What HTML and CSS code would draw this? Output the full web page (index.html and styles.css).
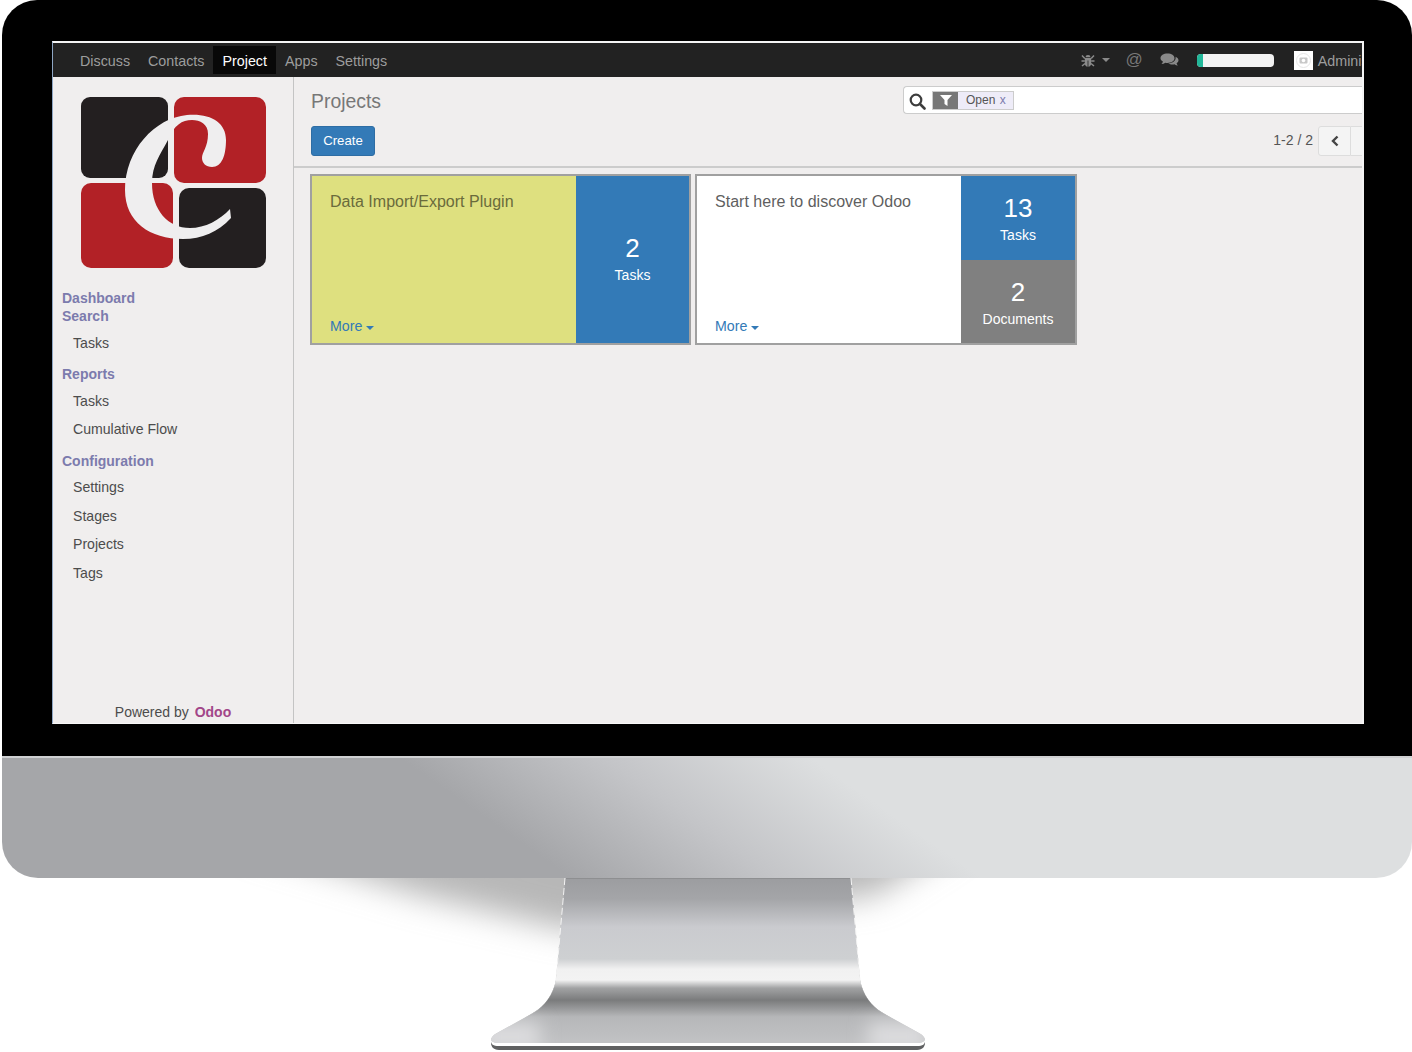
FILE: index.html
```html
<!DOCTYPE html>
<html lang="en">
<head>
  <meta charset="UTF-8">
  <title>Projects - Odoo</title>
  <link rel="stylesheet" href="styles.css">
</head>
<body>

  <div class="bezel">
    <div class="screen">

      <nav class="topbar">
        <ul class="menu">
          <li>Discuss</li>
          <li>Contacts</li>
          <li class="active">Project</li>
          <li>Apps</li>
          <li>Settings</li>
        </ul>
        <div class="systray">
          <svg class="bug" width="14" height="13" viewBox="0 0 14 13">
            <path d="M4.500 3.200a2.500 2.300 0 0 1 5 0z" fill="#8a8a8a"/>
            <path d="M3.800 4h6.400v5.200c0 2-1.400 3.400-2.800 3.600V6.500h-.8v6.300c-1.400-.2-2.800-1.600-2.800-3.600z" fill="#8a8a8a"/>
            <path d="M1 1.500l2.800 3M13 1.500l-2.800 3M.5 7h3.300M13.500 7h-3.300M1 12l3-2.500M13 12l-3-2.500" stroke="#8a8a8a" stroke-width="1.500" fill="none"/>
          </svg>
          <span class="caret nav-caret"></span>
          <span class="at">@</span>
          <svg class="chat" width="19" height="14" viewBox="0 0 19 14">
            <path d="M7.500 0.500c4 0 7 2 7 4.700s-3 4.700-7 4.700c-.8 0-1.500-.1-2.200-.2-1 .8-2.300 1.300-3.800 1.400.8-.8 1.300-1.700 1.400-2.600C1.300 7.600.5 6.500.5 5.200.5 2.500 3.500.5 7.500.5z" fill="#8a8a8a"/>
            <path d="M15.600 3.700c1.800.8 2.900 2 2.900 3.500 0 1.200-.7 2.200-1.900 3 .1.900.6 1.700 1.300 2.400-1.300-.1-2.500-.6-3.400-1.300-.6.100-1.200.2-1.900.2-1.800 0-3.300-.5-4.400-1.300 4.500.1 8-2.300 7.400-6.500z" fill="#8a8a8a"/>
          </svg>
          <div class="progress"><span class="progress-fill"></span></div>
          <div class="avatar">
            <svg width="19" height="19" viewBox="0 0 19 19">
              <circle cx="9.500" cy="9.500" r="7" fill="none" stroke="#e6e6e6"/>
              <rect x="5.500" y="6.500" width="8" height="6" rx="1" fill="#c8c8c8"/>
              <circle cx="9.500" cy="9.500" r="1.800" fill="#fff"/>
            </svg>
          </div>
          <span class="user">Administrator</span>
        </div>
      </nav>

      <div class="main">
        <aside class="sidebar">
          <svg class="logo" width="185" height="171" viewBox="81 97 185 171">
            <rect x="81" y="97" width="87" height="81" rx="9" fill="#231f20"/>
            <rect x="174" y="97" width="92" height="86" rx="10" fill="#b22126"/>
            <rect x="81" y="183" width="92" height="85" rx="10" fill="#b22126"/>
            <rect x="179" y="188" width="87" height="80" rx="10" fill="#231f20"/>
            <path d="M187 115C210 113 226 122 226 140 226 155 222 167 212 167 206 167 202 163 202 158 202 152 208 147 208 134 208 124 200 120 192 120 182 120 174 125 168 140 160 155 152 165 152 183 152 210 168 228 190 228 205 228 220 220 230 209L231 218C218 232 202 239 183 239 150 239 125 222 125 190 125 150 155 118 187 115z" fill="#efeeef"/>
          </svg>

          <div class="menu-head">Dashboard</div>
          <div class="menu-head">Search</div>
          <ul class="menu-items">
            <li>Tasks</li>
          </ul>
          <div class="menu-head">Reports</div>
          <ul class="menu-items">
            <li>Tasks</li>
            <li>Cumulative Flow</li>
          </ul>
          <div class="menu-head">Configuration</div>
          <ul class="menu-items">
            <li>Settings</li>
            <li>Stages</li>
            <li>Projects</li>
            <li>Tags</li>
          </ul>

          <div class="powered">Powered by <b>Odoo</b></div>
        </aside>

        <section class="content">
          <div class="control-panel">
            <div class="panel-row">
              <h1>Projects</h1>
              <div class="search">
                <svg class="search-icon" width="17" height="17" viewBox="0 0 17 17">
                  <circle cx="7" cy="7" r="5.300" fill="none" stroke="#3d3d3d" stroke-width="2.200"/>
                  <path d="M11 11l4.500 4.500" stroke="#3d3d3d" stroke-width="2.600" stroke-linecap="round"/>
                </svg>
                <div class="facet">
                  <span class="facet-icon">
                    <svg width="12" height="11" viewBox="0 0 12 11"><path d="M0 0h12L7.500 5v6l-3-2V5z" fill="#fff"/></svg>
                  </span>
                  <span class="facet-label">Open <i>x</i></span>
                </div>
              </div>
            </div>
            <div class="panel-row second">
              <button class="create">Create</button>
              <div class="pager">
                <span class="pager-count">1-2 / 2</span>
                <button class="pager-btn">
                  <svg width="10" height="12" viewBox="0 0 10 12"><path d="M7.500 1.500L3 6l4.500 4.500" fill="none" stroke="#444" stroke-width="2.400"/></svg>
                </button>
                <button class="pager-btn"></button>
              </div>
            </div>
          </div>

          <div class="cards">
            <div class="card">
              <div class="card-body yellow">
                <div class="card-title">Data Import/Export Plugin</div>
                <div class="card-more">More <span class="caret"></span></div>
              </div>
              <div class="card-stats">
                <div class="stat blue"><span class="num">2</span><span class="lbl">Tasks</span></div>
              </div>
            </div>
            <div class="card">
              <div class="card-body">
                <div class="card-title">Start here to discover Odoo</div>
                <div class="card-more">More <span class="caret"></span></div>
              </div>
              <div class="card-stats">
                <div class="stat blue top"><span class="num">13</span><span class="lbl">Tasks</span></div>
                <div class="stat grey"><span class="num">2</span><span class="lbl">Documents</span></div>
              </div>
            </div>
          </div>
        </section>
      </div>
    </div>
  </div>

  <div class="chin"></div>

  <svg class="stand" width="1412" height="174" viewBox="0 878 1412 174">
    <defs>
      <filter id="blur" x="-20%" y="-100%" width="140%" height="300%">
        <feGaussianBlur stdDeviation="16"/>
      </filter>
      <filter id="soft" x="-50%" y="-50%" width="200%" height="200%">
        <feGaussianBlur stdDeviation="9"/>
      </filter>
      <linearGradient id="neck" x1="0" y1="878" x2="0" y2="1050" gradientUnits="userSpaceOnUse">
        <stop offset="0" stop-color="#9c9da0"/>
        <stop offset="0.12" stop-color="#a4a5a8"/>
        <stop offset="0.285" stop-color="#cacbcf"/>
        <stop offset="0.47" stop-color="#ced0d2"/>
        <stop offset="0.53" stop-color="#f1f1f1"/>
        <stop offset="0.593" stop-color="#f3f3f3"/>
        <stop offset="0.64" stop-color="#a2a3a4"/>
        <stop offset="0.71" stop-color="#7a7b7c"/>
        <stop offset="0.808" stop-color="#b6b7b9"/>
        <stop offset="0.94" stop-color="#c0c1c3"/>
      </linearGradient>
      <clipPath id="foot">
        <path d="M491 1039c1-2 2-4 6-6l36-20c12-7 20-18 23-33l9-102h286l9 102c3 15 11 26 23 33l36 20c4 2 5 4 6 6 0 2-2 4-8 4H499c-6 0-8-2-8-4z"/>
      </clipPath>
    </defs>

    <path d="M240 840H960L875 895 570 930 420 895z" fill="#b7b7b7" filter="url(#blur)"/>

    <path d="M491 1043c1-4 2-6 6-8l36-22c12-7 20-18 23-33l9-102h286l9 102c3 15 11 26 23 33l36 22c4 2 5 4 6 8 0 3-2 7-8 7H499c-6 0-8-4-8-7z" fill="#5f6061"/>
    <path d="M491 1041c1-3 2-5 6-7l36-21c12-7 20-18 23-33l9-102h286l9 102c3 15 11 26 23 33l36 21c4 2 5 4 6 7 0 3-2 5-8 5H499c-6 0-8-2-8-5z" fill="#fff"/>
    <path d="M491 1039c1-2 2-4 6-6l36-20c12-7 20-18 23-33l9-102h286l9 102c3 15 11 26 23 33l36 20c4 2 5 4 6 6 0 2-2 4-8 4H499c-6 0-8-2-8-4z" fill="url(#neck)"/>
    <g clip-path="url(#foot)">
      <rect x="480" y="1022" width="60" height="30" fill="#dcdcde" filter="url(#soft)"/>
      <rect x="868" y="1022" width="60" height="30" fill="#dcdcde" filter="url(#soft)"/>
    </g>
    <path d="M565 878l-9 102M851 878l9 102" stroke="#f4f4f4" stroke-width="1" stroke-dasharray="7 3" fill="none"/>
    <path d="M566 878h284" stroke="#8e8f91" stroke-width="2"/>
  </svg>

</body>
</html>
```

FILE: styles.css
```css
* {
  box-sizing: border-box;
}
html, body {
  margin: 0;
  padding: 0;
  background: #fff;
  overflow: hidden;
}
body {
  font-family: "Liberation Sans", Arial, sans-serif;
  font-size: 14px;
  color: #4c4c4c;
}
ul {
  list-style: none;
  margin: 0;
  padding: 0;
}

/* monitor frame */
.bezel {
  margin-left: 2px;
  width: 1410px;
  height: 756px;
  padding: 41px 48px 32px 50px;
  background: #000;
  border-radius: 35px 35px 0 0;
}
.chin {
  margin-left: 2px;
  width: 1410px;
  height: 122px;
  background: linear-gradient(35deg, #a5a6a9 36%, #c4c5c8 49%, #dddfe0 62%);
  border-top: 2px solid #cfd0d2;
  border-radius: 0 0 36px 36px;
}
.stand {
  display: block;
}

/* screen */
.screen {
  height: 683px;
  display: flex;
  flex-direction: column;
  overflow: hidden;
  background: #f0eeee;
  border-top: 2px solid #f4f4f4;
  border-right: 2px solid #f4f4f4;
  border-bottom: 1px solid #f8f8f8;
  border-left: 1px solid #8ea6c4;
}

/* top navbar */
.topbar {
  flex: none;
  height: 34px;
  display: flex;
  justify-content: space-between;
  align-items: center;
  background: #222;
  font-size: 14.3px;
  color: #9d9d9d;
}
.menu {
  display: flex;
  height: 28px;
  margin-left: 18px;
}
.menu li {
  padding: 0 9px;
  line-height: 30px;
}
.menu .active {
  background: #080808;
  color: #fff;
}
.systray {
  display: flex;
  align-items: center;
  margin-right: -40px;
}
.bug {
  margin-right: 7px;
}
.caret {
  display: inline-block;
  border-top: 4px solid currentColor;
  border-left: 4px solid transparent;
  border-right: 4px solid transparent;
  vertical-align: 2px;
}
.nav-caret {
  color: #8a8a8a;
  margin-right: 16px;
}
.at {
  font-size: 17px;
  color: #777;
  margin-right: 17px;
}
.chat {
  margin-right: 18px;
}
.progress {
  width: 77px;
  height: 13px;
  border-radius: 4px;
  background: #f2f2f2;
  overflow: hidden;
  margin-right: 20px;
}
.progress-fill {
  display: block;
  width: 6px;
  height: 13px;
  background: #21b799;
}
.avatar {
  width: 19px;
  height: 19px;
  background: #fff;
  margin-right: 5px;
}
.avatar svg {
  display: block;
}
.user {
  white-space: nowrap;
  padding-top: 1px;
}

/* sidebar + content */
.main {
  flex: 1;
  display: flex;
  min-height: 0;
}
.sidebar {
  flex: none;
  width: 241px;
  display: flex;
  flex-direction: column;
  padding: 20px 0 2px 0;
  border-right: 1px solid #c4c4c4;
}
.logo {
  display: block;
  margin: 0 0 21px 28px;
}
.menu-head {
  padding-left: 9px;
  line-height: 18px;
  font-size: 14px;
  font-weight: bold;
  color: #7c7bad;
}
.menu-items {
  margin: 3.5px 0 8px;
}
.menu-items li {
  padding-left: 20px;
  line-height: 28.5px;
  font-size: 14.1px;
}
.powered {
  margin-top: auto;
  text-align: center;
  line-height: 18px;
  font-size: 14px;
}
.powered b {
  color: #a24689;
  margin-left: 2px;
}

.content {
  flex: 1;
  min-width: 0;
  overflow: hidden;
}
.control-panel {
  height: 91px;
  padding: 9px 0 0 17px;
  border-bottom: 2px solid #ccc;
}
.panel-row {
  display: flex;
  justify-content: space-between;
  align-items: center;
  height: 28px;
}
.panel-row.second {
  height: 30px;
  margin-top: 12px;
}
h1 {
  margin: 0;
  padding-top: 2px;
  font-size: 19.4px;
  font-weight: normal;
  color: #777;
}
.search {
  width: 459px;
  height: 28px;
  display: flex;
  align-items: center;
  background: #fff;
  border: 1px solid #ccc;
  border-right: 0;
  border-radius: 4px 0 0 4px;
  padding-left: 5px;
}
.search-icon {
  margin: 3px 6px 0 0;
}
.facet {
  display: flex;
  height: 19px;
  border: 1px solid #ccc;
  font-size: 12px;
}
.facet-icon {
  width: 25px;
  display: flex;
  align-items: center;
  justify-content: center;
  background: #777;
}
.facet-label {
  padding: 0 7px 0 8px;
  line-height: 16px;
  background: #eeecf8;
  color: #555;
}
.facet-label i {
  font-style: normal;
  color: #7c7bad;
  margin-left: 1px;
}
button {
  font-family: inherit;
}
.create {
  width: 64px;
  height: 30px;
  padding: 0 0 1px;
  font-size: 13.2px;
  color: #fff;
  background: #337ab7;
  border: 1px solid #2e6da4;
  border-radius: 3px;
}
.pager {
  display: flex;
  align-items: center;
  margin-right: -22px;
}
.pager-count {
  font-size: 14px;
  margin: 0 5px 2px 0;
  color: #555;
}
.pager-btn {
  width: 33px;
  height: 30px;
  padding: 0;
  display: flex;
  align-items: center;
  justify-content: center;
  background: #f4f4f4;
  border: 1px solid #ddd;
  border-radius: 3px 0 0 3px;
}
.pager-btn + .pager-btn {
  border-left: 0;
  border-radius: 0;
}

/* project cards */
.cards {
  display: flex;
  gap: 4px;
  padding: 6px 0 0 16px;
}
.card {
  width: 381px;
  height: 171px;
  display: flex;
  border: 2px solid #a0a0a0;
}
.card:last-child {
  width: 382px;
}
.card-body {
  flex: none;
  width: 264px;
  display: flex;
  flex-direction: column;
  justify-content: space-between;
  padding: 15px 18px 8px;
  background: #fff;
}
.card-body.yellow {
  background: #dee07f;
}
.card-title {
  font-size: 16.05px;
  line-height: 20px;
  color: #5f5f5f;
}
.yellow .card-title {
  color: #6a6b3c;
}
.card-more {
  font-size: 14.2px;
  line-height: 18px;
  color: #337ab7;
}
.card-more .caret {
  vertical-align: 1px;
}
.card-stats {
  flex: 1;
  display: flex;
  flex-direction: column;
}
.stat {
  flex: 1;
  display: flex;
  flex-direction: column;
  align-items: center;
  justify-content: center;
  padding-top: 2px;
  color: #fff;
}
.stat.blue {
  background: #337ab7;
}
.stat.top {
  padding-top: 4px;
}
.stat.grey {
  flex: 0 0 83px;
  background: #808080;
  padding-top: 5px;
}
.num {
  font-size: 26px;
  line-height: 30px;
}
.lbl {
  font-size: 14px;
  line-height: 25px;
}
```
